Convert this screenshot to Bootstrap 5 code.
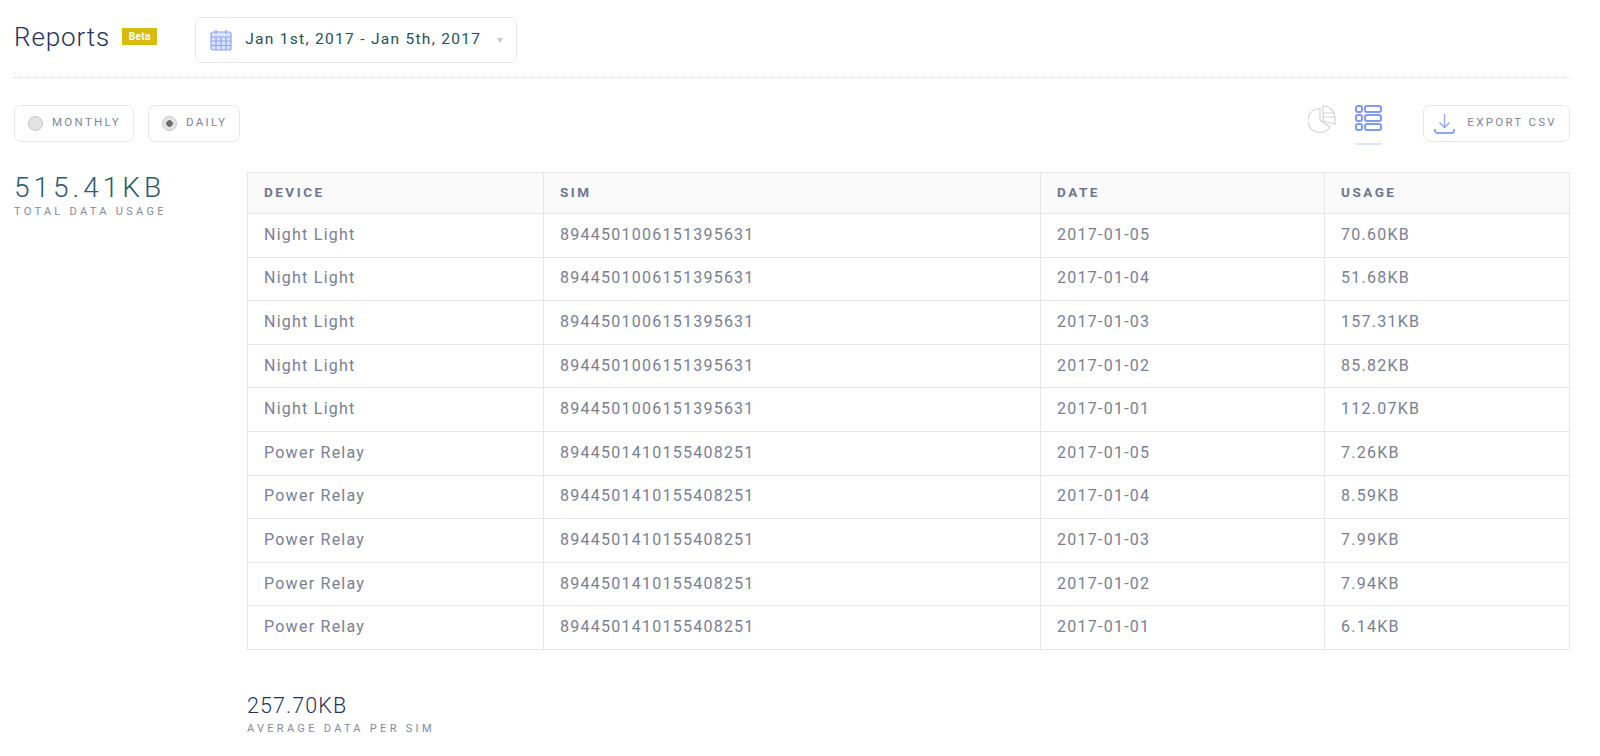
<!DOCTYPE html>
<html lang="en"><head><meta charset="utf-8"><title>Reports</title>
<link rel="stylesheet" href="https://cdn.jsdelivr.net/npm/bootstrap@5.3.0/dist/css/bootstrap.min.css">
<style>
body{font-family:Roboto,"Liberation Sans",sans-serif;background:#fff;color:#7a8092;overflow:hidden}
.page-wrap{padding:17px 30px 0 14px;height:756px}
.head-row{height:60px;border-bottom:1px dotted #d9dbe0;box-sizing:content-box}
.rep-title{font-size:26px;font-weight:300;color:#26325a;letter-spacing:.9px;line-height:36px;margin:2px 0 0}
.beta-tag{background:#d9bb0b;color:#fff;font-size:10px;font-weight:700;line-height:17px;height:17px;width:35px;text-align:center;margin:11px 38px 0 12px;letter-spacing:.4px}
.date-pick{width:322px;height:46px;border:1px solid #e6e7ea;border-radius:7px;padding:0 14px;color:#25505f;font-size:15.5px;letter-spacing:1.3px}
.date-caret{width:0;height:0;border:3px solid transparent;border-top:5px solid #c6cad0;margin:3px -1px 0 auto}
.tool-row{height:38px;margin-top:26px}
.opt-btn{height:37px;border:1px solid #e6e7ea;border-radius:7px;padding:0 12px 0 13px;font-size:11.5px;letter-spacing:2.3px;color:#80869a;gap:9px}
.opt-first{margin-right:14px}
.radio-dot{width:15px;height:15px;border-radius:50%;border:1px solid #c4c6c9;background:#e3e3e3}
.radio-dot.on{background:radial-gradient(circle,#6f6f72 0 3px,#e3e3e3 3.6px)}
.pie-ic{margin-top:1px}
.view-on{border-bottom:2px solid #dfe6fb;padding-bottom:12px;margin:1px 41px 0 19px;width:27px}
.exp-btn{width:147px;height:37px;border:1px solid #e6e7ea;border-radius:7px;padding:0 12px 0 10px;font-size:11.5px;letter-spacing:2.3px;color:#80869a}
.main-row{margin-top:30px}
.side-col{width:233px;flex:none}
.big-val{font-size:28px;font-weight:300;letter-spacing:4px;color:#2d5a6b;line-height:29px;margin-top:1px}
.cap-lbl{font-size:11px;letter-spacing:3.3px;color:#858b9c;line-height:14px;margin-top:3px}
.tbl-col{flex:1;min-width:0}
.data-tbl{table-layout:fixed;width:1322px;margin:0;border-color:#e7e7e9;--bs-table-color:#7a8092}
.data-tbl th{background:#fafafa;font-size:13.5px;font-weight:700;letter-spacing:2.5px;color:#70768a;height:41px;padding:0 15px 1px 16px;vertical-align:middle;border-width:1px}
.data-tbl td{height:43.6px;padding:0 15px 1px 16px;vertical-align:middle;font-size:16px;font-weight:400;letter-spacing:1.25px;color:#7a8092;border-width:1px}
.c-dev{width:296px}.c-sim{width:497px}.c-date{width:284px}.c-use{width:245px}
.avg-box{margin-top:42px}
.avg-val{font-size:21.5px;font-weight:300;color:#26325a;letter-spacing:1.1px;line-height:27px}
</style></head><body>
<div class="page-wrap">
  <div class="head-row d-flex align-items-start">
    <h1 class="rep-title">Reports</h1>
    <span class="beta-tag">Beta</span>
    <div class="date-pick d-flex align-items-center gap-2">
      <svg width="23" height="23" viewBox="0 0 23 23" fill="none" stroke="#8ea4f7" stroke-width="1.2"><rect x="1" y="3" width="20" height="18" rx="2" fill="#dbe3fd"/><path d="M1 8h20M1 12h20M1 16.500h20M6 8v13M11 8v13M16 8v13M6 1v4M16 1v4"/></svg>
      <span class="ms-1">Jan 1st, 2017 - Jan 5th, 2017</span>
      <span class="date-caret"></span>
    </div>
  </div>
  <div class="tool-row d-flex align-items-center">
    <div class="opt-btn opt-first d-flex align-items-center"><span class="radio-dot"></span>MONTHLY</div>
    <div class="opt-btn d-flex align-items-center"><span class="radio-dot on"></span>DAILY</div>
    <svg class="pie-ic ms-auto align-self-start" width="28" height="28" viewBox="0 0 28 28" fill="none" stroke="#d4d4d6" stroke-width="1.2"><path d="M12 3.500A12 12 0 1 0 22 22L12 15Z"/><path d="M15 1a12 12 0 0 1 12 12v6l-12-3Z"/><path d="M15 8h12M15 12h12"/></svg>
    <div class="view-on align-self-start"><svg class="d-block" width="27" height="26" viewBox="0 0 27 26" fill="none" stroke="#7f99f4" stroke-width="2"><rect x="1" y="1" width="6" height="6" rx="2"/><rect x="10" y="1" width="16" height="6" rx="2"/><rect x="1" y="10" width="6" height="6" rx="2"/><rect x="10" y="10" width="16" height="6" rx="2"/><rect x="1" y="19" width="6" height="6" rx="2"/><rect x="10" y="19" width="16" height="6" rx="2"/></svg></div>
    <div class="exp-btn d-flex align-items-center justify-content-between">
      <svg width="21" height="21" viewBox="0 0 21 21" fill="none" stroke="#8ea4f7" stroke-width="1.300"><path d="M10.500 1v13M5.500 9.500l5 5 5-5"/><path d="M1 16v1.500a2.500 2.500 0 0 0 2.500 2.500h14a2.500 2.500 0 0 0 2.500-2.500V16" stroke-width="2"/></svg>
      <span>EXPORT CSV</span>
    </div>
  </div>
  <div class="main-row d-flex">
    <div class="side-col">
      <div class="big-val">515.41KB</div>
      <div class="cap-lbl">TOTAL DATA USAGE</div>
    </div>
    <div class="tbl-col">
      <table class="table table-bordered data-tbl">
        <colgroup><col class="c-dev"><col class="c-sim"><col class="c-date"><col class="c-use"></colgroup>
        <thead><tr><th>DEVICE</th><th>SIM</th><th>DATE</th><th>USAGE</th></tr></thead>
        <tbody>
          <tr><td>Night Light</td><td>8944501006151395631</td><td>2017-01-05</td><td>70.60KB</td></tr>
          <tr><td>Night Light</td><td>8944501006151395631</td><td>2017-01-04</td><td>51.68KB</td></tr>
          <tr><td>Night Light</td><td>8944501006151395631</td><td>2017-01-03</td><td>157.31KB</td></tr>
          <tr><td>Night Light</td><td>8944501006151395631</td><td>2017-01-02</td><td>85.82KB</td></tr>
          <tr><td>Night Light</td><td>8944501006151395631</td><td>2017-01-01</td><td>112.07KB</td></tr>
          <tr><td>Power Relay</td><td>8944501410155408251</td><td>2017-01-05</td><td>7.26KB</td></tr>
          <tr><td>Power Relay</td><td>8944501410155408251</td><td>2017-01-04</td><td>8.59KB</td></tr>
          <tr><td>Power Relay</td><td>8944501410155408251</td><td>2017-01-03</td><td>7.99KB</td></tr>
          <tr><td>Power Relay</td><td>8944501410155408251</td><td>2017-01-02</td><td>7.94KB</td></tr>
          <tr><td>Power Relay</td><td>8944501410155408251</td><td>2017-01-01</td><td>6.14KB</td></tr>
        </tbody>
      </table>
      <div class="avg-box">
        <div class="avg-val">257.70KB</div>
        <div class="cap-lbl">AVERAGE DATA PER SIM</div>
      </div>
    </div>
  </div>
</div>
</body></html>
